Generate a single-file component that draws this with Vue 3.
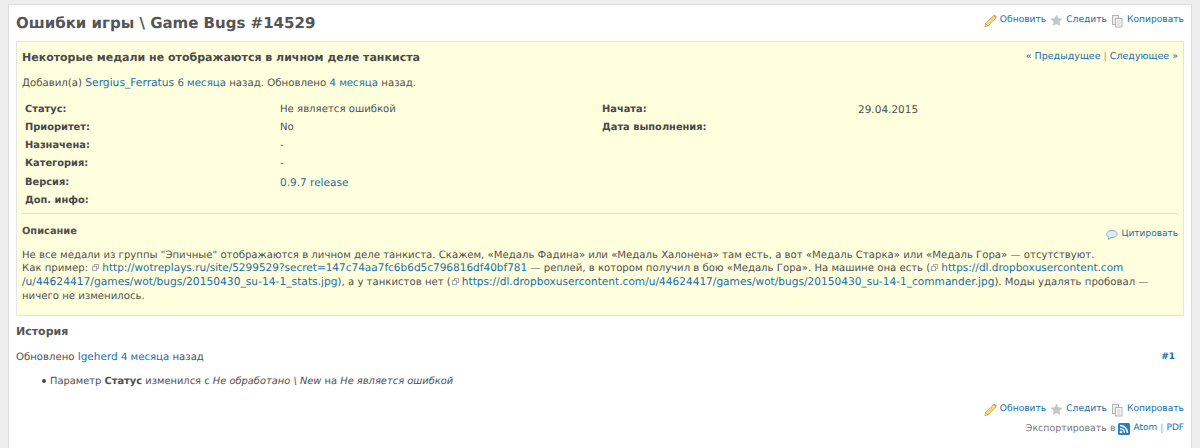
<script setup>
const attrsLeft = [
  ['Статус:', 'Не является ошибкой', false],
  ['Приоритет:', 'No', false],
  ['Назначена:', '-', false],
  ['Категория:', '-', false],
  ['Версия:', '0.9.7 release', true],
  ['Доп. инфо:', '', false],
]
const attrsRight = [
  ['Начата:', '29.04.2015'],
  ['Дата выполнения:', ''],
]
</script>

<template>
  <div class="page">
    <main class="content">
      <header class="top">
        <h2 class="title">Ошибки игры \ Game Bugs #14529</h2>
        <div class="actions">
          <a class="act"><svg class="ic" viewBox="0 0 16 16"><path d="M1.500 9.500L9.500 1.500l2.500 2.500-8 8z" fill="#f5d67c" stroke="#d8a847" stroke-width=".8"/><path d="M9.500 1.500l1-1 2.500 2.500-1 1z" fill="#e8937f"/><path d="M1.500 9.500L.8 12.800l3.200-.8z" fill="#f4e3c0" stroke="#a8854f" stroke-width=".5"/></svg>Обновить</a>
          <a class="act"><svg class="ic" viewBox="0 0 16 16"><path d="M6.500 1l1.700 3.500 3.800.5-2.800 2.700.7 3.800-3.400-1.800-3.400 1.800.7-3.800L1 5l3.800-.5z" fill="#c6c6c6" stroke="#c0c0c0" stroke-width=".5"/></svg>Следить</a>
          <a class="act"><svg class="ic" viewBox="0 0 16 16"><rect x="1.500" y="1.500" width="6" height="9" fill="#eee" stroke="#b5b5b5"/><rect x="4.500" y="4.500" width="6.500" height="8.500" fill="#fafafa" stroke="#b5b5b5"/><path d="M6 7h3.500M6 9h3.500M6 11h3.500" stroke="#ccc"/></svg>Копировать</a>
        </div>
      </header>

      <section class="issue">
        <div class="nav"><a>« Предыдущее</a> <span class="sep">|</span> <a>Следующее »</a></div>
        <h3 class="subject">Некоторые медали не отображаются в личном деле танкиста</h3>
        <p class="author">Добавил(а) <a class="user">Sergius_Ferratus</a> <a>6 месяца</a> назад. Обновлено <a>4 месяца</a> назад.</p>

        <div class="attrs">
          <div class="col">
            <div v-for="r in attrsLeft" :key="r[0]" class="row">
              <b class="k">{{ r[0] }}</b><span class="v"><a v-if="r[2]" class="lat">{{ r[1] }}</a><template v-else>{{ r[1] }}</template></span>
            </div>
          </div>
          <div class="col second">
            <div v-for="r in attrsRight" :key="r[0]" class="row">
              <b class="k">{{ r[0] }}</b><span class="v lat">{{ r[1] }}</span>
            </div>
          </div>
        </div>

        <hr class="rule" />

        <div class="desc-head">
          <b class="desc-title">Описание</b>
          <a class="quote"><svg class="ic-q" viewBox="0 0 12 12"><path d="M.8 5C.8 2.800 3 1.500 6 1.500s5.200 1.300 5.200 3.500S9 8.500 6 8.500H5L2.500 10.700V8C1.400 7.400.8 6.300.8 5z" fill="#dcebf6" stroke="#7fa8cc" stroke-width=".9"/></svg>Цитировать</a>
        </div>
        <div class="desc">
          Не все медали из группы "Эпичные" отображаются в личном деле танкиста. Скажем, «Медаль Фадина» или «Медаль Халонена» там есть, а вот «Медаль Старка» или «Медаль Гора» — отсутствуют.<br />
          Как пример: <svg class="ext" viewBox="0 0 9 9"><rect x="3.500" y="1.500" width="4" height="4" fill="none" stroke="#aaa"/><rect x="1.500" y="3.500" width="4" height="4" fill="#fff" stroke="#aaa"/></svg><a class="lat">http://wotreplays.ru/site/5299529?secret=147c74aa7fc6b6d5c796816df40bf781</a> — реплей, в котором получил в бою «Медаль Гора». На машине она есть (<svg class="ext" viewBox="0 0 9 9"><rect x="3.500" y="1.500" width="4" height="4" fill="none" stroke="#aaa"/><rect x="1.500" y="3.500" width="4" height="4" fill="#fff" stroke="#aaa"/></svg><a class="lat">https://dl.dropboxusercontent.com<br /><span class="path">/u/44624417/games/wot/bugs/20150430_su-14-1_stats.jpg</span></a>), а у танкистов нет (<svg class="ext" viewBox="0 0 9 9"><rect x="3.500" y="1.500" width="4" height="4" fill="none" stroke="#aaa"/><rect x="1.500" y="3.500" width="4" height="4" fill="#fff" stroke="#aaa"/></svg><a class="long">https://dl.dropboxusercontent.com/u/44624417/games/wot/bugs/20150430_su-14-1_commander.jpg</a>). Моды удалять пробовал —<br />ничего не изменилось.
        </div>
      </section>

      <h3 class="hist">История</h3>
      <div class="entry">
        <span>Обновлено <a class="lat">lgeherd</a> <a>4 месяца</a> назад</span>
        <a class="num">#1</a>
      </div>
      <ul class="changes">
        <li>Параметр <b>Статус</b> изменился с <i>Не обработано \ New</i> на <i>Не является ошибкой</i></li>
      </ul>

      <div class="actions bottom">
        <a class="act"><svg class="ic" viewBox="0 0 16 16"><path d="M1.500 9.500L9.500 1.500l2.500 2.500-8 8z" fill="#f5d67c" stroke="#d8a847" stroke-width=".8"/><path d="M9.500 1.500l1-1 2.500 2.500-1 1z" fill="#e8937f"/><path d="M1.500 9.500L.8 12.800l3.200-.8z" fill="#f4e3c0" stroke="#a8854f" stroke-width=".5"/></svg>Обновить</a>
        <a class="act"><svg class="ic" viewBox="0 0 16 16"><path d="M6.500 1l1.700 3.500 3.800.5-2.800 2.700.7 3.800-3.400-1.800-3.400 1.800.7-3.800L1 5l3.800-.5z" fill="#c6c6c6" stroke="#c0c0c0" stroke-width=".5"/></svg>Следить</a>
        <a class="act"><svg class="ic" viewBox="0 0 16 16"><rect x="1.500" y="1.500" width="6" height="9" fill="#eee" stroke="#b5b5b5"/><rect x="4.500" y="4.500" width="6.500" height="8.500" fill="#fafafa" stroke="#b5b5b5"/><path d="M6 7h3.500M6 9h3.500M6 11h3.500" stroke="#ccc"/></svg>Копировать</a>
      </div>
      <div class="export">
        Экспортировать в
        <svg class="rss" viewBox="0 0 12 12"><rect width="12" height="12" rx="1.500" fill="#2a7fc0"/><circle cx="3" cy="9" r="1.300" fill="#fff"/><path d="M2 5.500a4.500 4.500 0 0 1 4.500 4.500M2 2.500a7.500 7.500 0 0 1 7.500 7.500" fill="none" stroke="#fff" stroke-width="1.400"/></svg>
        <a>Atom</a> <span class="sep">|</span> <a>PDF</a>
      </div>
    </main>
  </div>
</template>

<style>
html, body { margin: 0; background: #eeeeee; }
</style>

<style scoped>
.page {
  height: 448px;
  overflow: hidden;
  padding: 4px 8px 0 8px;
  box-sizing: border-box;
  font-family: "DejaVu Sans", Verdana, sans-serif;
  font-size: 10.15px;
  line-height: 15px;
  color: #505050;
  text-rendering: geometricPrecision;
}
a { color: #1a6ea8; text-decoration: none; }
.lat { font-size: 10.5px; }
.user { font-size: 10.7px; }
.path { font-size: 10.7px; }
.long { font-size: 10.58px; }
.content {
  background: #fff;
  border: 1px solid #ddd;
  border-bottom: 0;
  height: 460px;
  padding: 0 7px;
  box-sizing: border-box;
}
.top { display: flex; justify-content: space-between; align-items: flex-start; height: 36px; }
.title { margin: 0; font-size: 15px; font-weight: bold; color: #555; line-height: 36px; }
.actions { display: flex; justify-content: flex-end; gap: 4px; font-size: 9.15px; }
.top .actions { margin-top: 9px; }
.act { display: flex; align-items: flex-start; line-height: 12px; }
.ic { width: 16px; height: 16px; flex: none; }
.issue {
  background: #ffffdd;
  border: 1px solid #e4e4e4;
  height: 275px;
  box-sizing: border-box;
  padding: 6px 5px;
  position: relative;
}
.nav { position: absolute; top: 7px; right: 5px; font-size: 9.5px; }
.sep { color: #999; }
.subject { margin: 0; font-size: 11px; line-height: 20px; font-weight: bold; color: #4a4a4a; }
.author { margin: 7px 0 0; line-height: 15px; font-size: 10.2px; }
.attrs { display: grid; grid-template-columns: 577px 1fr; margin-top: 9.500px; }
.row { display: grid; grid-template-columns: 255px 1fr; height: 18.300px; line-height: 18px; padding-left: 3px; }
.second .row { grid-template-columns: 256px 1fr; }
.k { color: #484848; font-size: 9.85px; }
.rule { border: 0; border-top: 1px solid #ddd; margin: 2.500px 0 8px; }
.desc-head { display: flex; justify-content: space-between; align-items: center; height: 20px; }
.desc-title { font-size: 9.85px; }
.quote { display: flex; align-items: center; gap: 3px; font-size: 9px; margin-top: 6px; }
.ic-q { width: 12px; height: 12px; }
.desc { margin-top: 7px; line-height: 13.330px; }
.ext { width: 9px; height: 9px; margin: 0 2px 0 0; vertical-align: -1px; }
.hist { margin: 8px 0 0; font-size: 11px; line-height: 16px; color: #555; font-weight: bold; }
.entry { display: flex; justify-content: space-between; margin-top: 10px; padding-right: 9px; }
.num { font-weight: bold; font-size: 9px; }
.changes { margin: 9px 0 0; padding-left: 34px; list-style: none; font-size: 9.9px; }
.changes li::before {
  content: "";
  display: inline-block;
  width: 4px;
  height: 4px;
  border-radius: 50%;
  background: #484848;
  margin: 0 4px 1px -8px;
}
.bottom { margin-top: 13.500px; }
.export { display: flex; justify-content: flex-end; align-items: center; gap: 3px; margin-top: 2.500px; color: #777; font-size: 9.43px; }
.export a { font-size: 9px; }
.rss { width: 12px; height: 12px; }
</style>
